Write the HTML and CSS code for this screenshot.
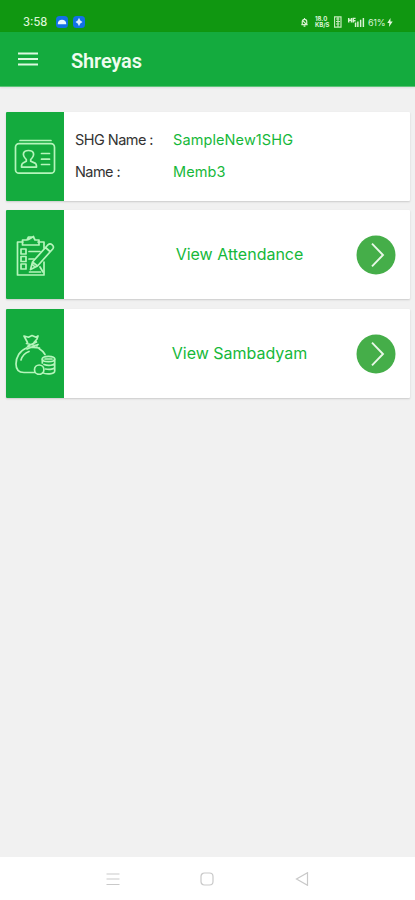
FILE: index.html
```html
<!DOCTYPE html>
<html lang="en">
<head>
<meta charset="utf-8">
<title>Shreyas</title>
<link rel="stylesheet" href="styles.css">
</head>
<body>
<div class="screen">
  <div class="status">
    <span class="time">3:58</span>
    <svg class="app" viewBox="0 0 12 12"><rect width="12" height="12" rx="3.500" fill="#1271e6"/><path d="M1.700 8.200C2 5 3.500 3.800 6 3.800s4 1.200 4.300 4.400z" fill="#eaf7ff"/></svg>
    <svg class="app second" viewBox="0 0 12 12"><rect width="12" height="12" rx="3.500" fill="#1271e6"/><path d="M6 1.800L7.300 4.500 9.500 6 7.300 7.500 6 10.200 4.700 7.500 2.500 6 4.700 4.500z" fill="#d8efff"/></svg>
    <div class="right">
      <svg class="bell" viewBox="0 0 10 11"><path d="M1.500 8.500h7M2.500 8V5a2.500 2.500 0 0 1 5 0v3M5 1v1.500M4 10h2M3 4l4 4" stroke="#d9f3d3" stroke-width="1.300" fill="none"/></svg>
      <span class="speed"><span>18.0</span><span>KB/S</span></span>
      <svg class="sim" viewBox="0 0 8 12"><path d="M.5.800h6.500v10.400H.5zM2 3h3.500M2 5.500h4M2 8h3.500M4 1v10" stroke="#c5ebbc" stroke-width="1.200" fill="none"/></svg>
      <svg class="signal" viewBox="0 0 19 12"><path d="M1 1v5M1 3.500h3M4 1v5M6 6V1.500h2.500M6 4h2.500M8.500 6v5M11 5v6M14 3v8M17 1v10" stroke="#d9f3d3" stroke-width="1.600" fill="none"/></svg>
      <span class="pct">61%</span>
      <svg class="bolt" viewBox="0 0 6 10"><path d="M3.500 0L0 5.500h2.300L1.800 10 6 4H3.500z" fill="#e4f7df"/></svg>
    </div>
  </div>
  <header class="bar">
    <svg class="menu" viewBox="0 0 20 14"><path d="M0 1.500h20M0 7h20M0 12.500h20" stroke="#dcf9df" stroke-width="2.200"/></svg>
    <h1>Shreyas</h1>
  </header>
  <main>
    <section class="card">
      <div class="tile">
        <svg viewBox="0 0 42 42" class="ico"><path d="M6 5.500h31"/><rect x="1.500" y="8.700" width="39" height="29.500" rx="3.500"/><path d="M12.300 24.500c-5-5-3-9 2.200-9s7.200 4 2.200 9v1.800l4.300 1.800c1 .5 1.500 1.700 1.500 4H7.500c0-2.300.4-3.500 1.500-4l3.300-1.800z"/><path d="M27.500 18.500h8M27.500 24.200h8M27.500 29.500h8"/></svg>
      </div>
      <div class="info">
        <span class="k">SHG Name :</span><span class="v">SampleNew1SHG</span>
        <span class="k">Name :</span><span class="v">Memb3</span>
      </div>
    </section>
    <section class="card">
      <div class="tile">
        <svg viewBox="0 0 42 42" class="ico"><path d="M9 8H3.500v33H30V28M24 8h6v6M8.500 11V6H13l1.500-3h5L21 6h4v5zM14.500 5.500l5-3"/><path d="M7 15h5v5H7zM7 22.500h5v5H7zM7 30h5v5H7zM15 17.500h11M15 25h5M26 33l3 5M15.500 38h11"/><path d="M16.500 35.500l2-7.500L34 10.800q2-2 4.200 0t.5 4.200L23.500 32zM18.500 28l5 4M31.500 13.500l4.500 4M19 31l2 2"/></svg>
      </div>
      <span class="label">View Attendance</span>
      <svg class="go" viewBox="0 0 40 40"><circle cx="20" cy="20" r="19.500"/><path d="M16 8.700L27 20 16 31.300"/></svg>
    </section>
    <section class="card">
      <div class="tile">
        <svg viewBox="0 0 42 42" class="ico"><path d="M13.500 9.500L10 3l4.500 1.200L18 2.500l4 1.700L24 3l-1 3-3 3.500M12.500 10.500L23 13M14 13l8.500-4M13.500 13.800l12 1.200M13 16l11-4.500"/><path d="M12.500 15C6 17.500 2 24 2 31c0 5.500 3 8.500 8 8.500h11M25 15.500c2.500 1.500 4.500 3.500 6 6M7 27c1.200-4.200 4-7 8-8.500"/><ellipse cx="34.500" cy="26" rx="6.200" ry="2.700"/><path d="M28.300 26v4M40.700 26v12c0 3.500-9 3.600-12.200 1.600M30 31.500c4 1.500 10.700 1 10.700-1.500M31.500 36c4 .8 9.200.2 9.200-2M31 26h7"/><circle cx="25.200" cy="36.700" r="4.700"/></svg>
      </div>
      <span class="label">View Sambadyam</span>
      <svg class="go" viewBox="0 0 40 40"><circle cx="20" cy="20" r="19.500"/><path d="M16 8.700L27 20 16 31.300"/></svg>
    </section>
  </main>
  <nav>
    <svg viewBox="0 0 14 14"><path d="M.5 2h13M.5 7h13M.5 12.500h13"/></svg>
    <svg viewBox="0 0 14 14"><rect x="1" y="1" width="12" height="12" rx="3.500"/></svg>
    <svg viewBox="0 0 14 14"><path d="M12.500.7v12.600L1.500 7z"/></svg>
  </nav>
</div>
</body>
</html>
```
FILE: styles.css
```css
* { box-sizing: border-box; }
body { margin: 0; font-family: Inter, sans-serif; }
svg { display: block; flex: none; }
.screen { width: 415px; height: 900px; display: flex; flex-direction: column; background: #f1f1f1; overflow: hidden; }
.status { height: 32px; flex: none; background: #109711; display: flex; align-items: center; padding: 12px 22px 0 23px; color: #dcf5d8; }
.time { width: 33px; font-size: 11.2px; line-height: 14px; font-weight: 500; }
.app { width: 12px; height: 12px; }
.second { margin-left: 5px; }
.right { margin-left: auto; display: flex; align-items: center; }
.bell { width: 9px; height: 10px; }
.speed { display: flex; flex-direction: column; width: 15px; margin-left: 6px; font-size: 6px; line-height: 6px; font-weight: 700; }
.sim { width: 8px; height: 12px; margin-left: 4px; }
.signal { width: 19px; height: 11px; margin-left: 5px; }
.pct { width: 18px; font-size: 9px; margin-left: 2px; letter-spacing: -.3px; }
.bolt { width: 6px; height: 9px; margin-left: 1px; }
.bar { height: 55px; flex: none; background: #14ab3e; display: flex; align-items: center; padding-left: 18px; border-bottom: 1px solid #5cc477; box-shadow: 0 1px 2px rgba(0,0,0,.08); }
.menu { width: 20px; height: 14px; }
h1 { margin: 3px 0 0 33px; font-family: Roboto, sans-serif; font-size: 20px; line-height: 24px; font-weight: 600; letter-spacing: -.15px; color: #effcef; }
main { flex: 1; display: flex; flex-direction: column; gap: 9.9px; padding: 24.55px 5px 0 6px; }
.card { height: 89px; flex: none; display: flex; align-items: center; background: #fff; border-radius: 1px; box-shadow: 0 1px 2px rgba(0,0,0,.16); }
.tile { width: 58px; height: 89px; flex: none; background: #14ab3e; border-radius: 1px 0 0 1px; display: flex; align-items: center; justify-content: center; }
.ico { width: 42px; height: 42px; fill: none; stroke: #b5f5bb; stroke-width: 1.7; stroke-linecap: round; stroke-linejoin: round; }
.info { display: grid; grid-template-columns: 98px auto; row-gap: 12px; padding-left: 11px; font-size: 14.5px; line-height: 20px; }
.k { color: #333; letter-spacing: -.55px; }
.v { color: #16b83a; letter-spacing: .1px; }
.label { flex: 1; text-align: center; color: #16b83a; font-size: 16px; line-height: 22px; padding: 0 0 1px 88px; }
.go { width: 40px; height: 40px; margin: 0 14px 0 29px; }
.go circle { fill: #45ae49; }
.go path { fill: none; stroke: #e8f8e7; stroke-width: 1.9; }
nav { height: 43px; flex: none; background: #fff; display: flex; align-items: center; justify-content: center; gap: 80.5px; }
nav svg { width: 14px; height: 14px; fill: none; stroke: #c9c9c9; stroke-width: 1.2; }
nav svg:first-child { margin-left: -1px; }
```
